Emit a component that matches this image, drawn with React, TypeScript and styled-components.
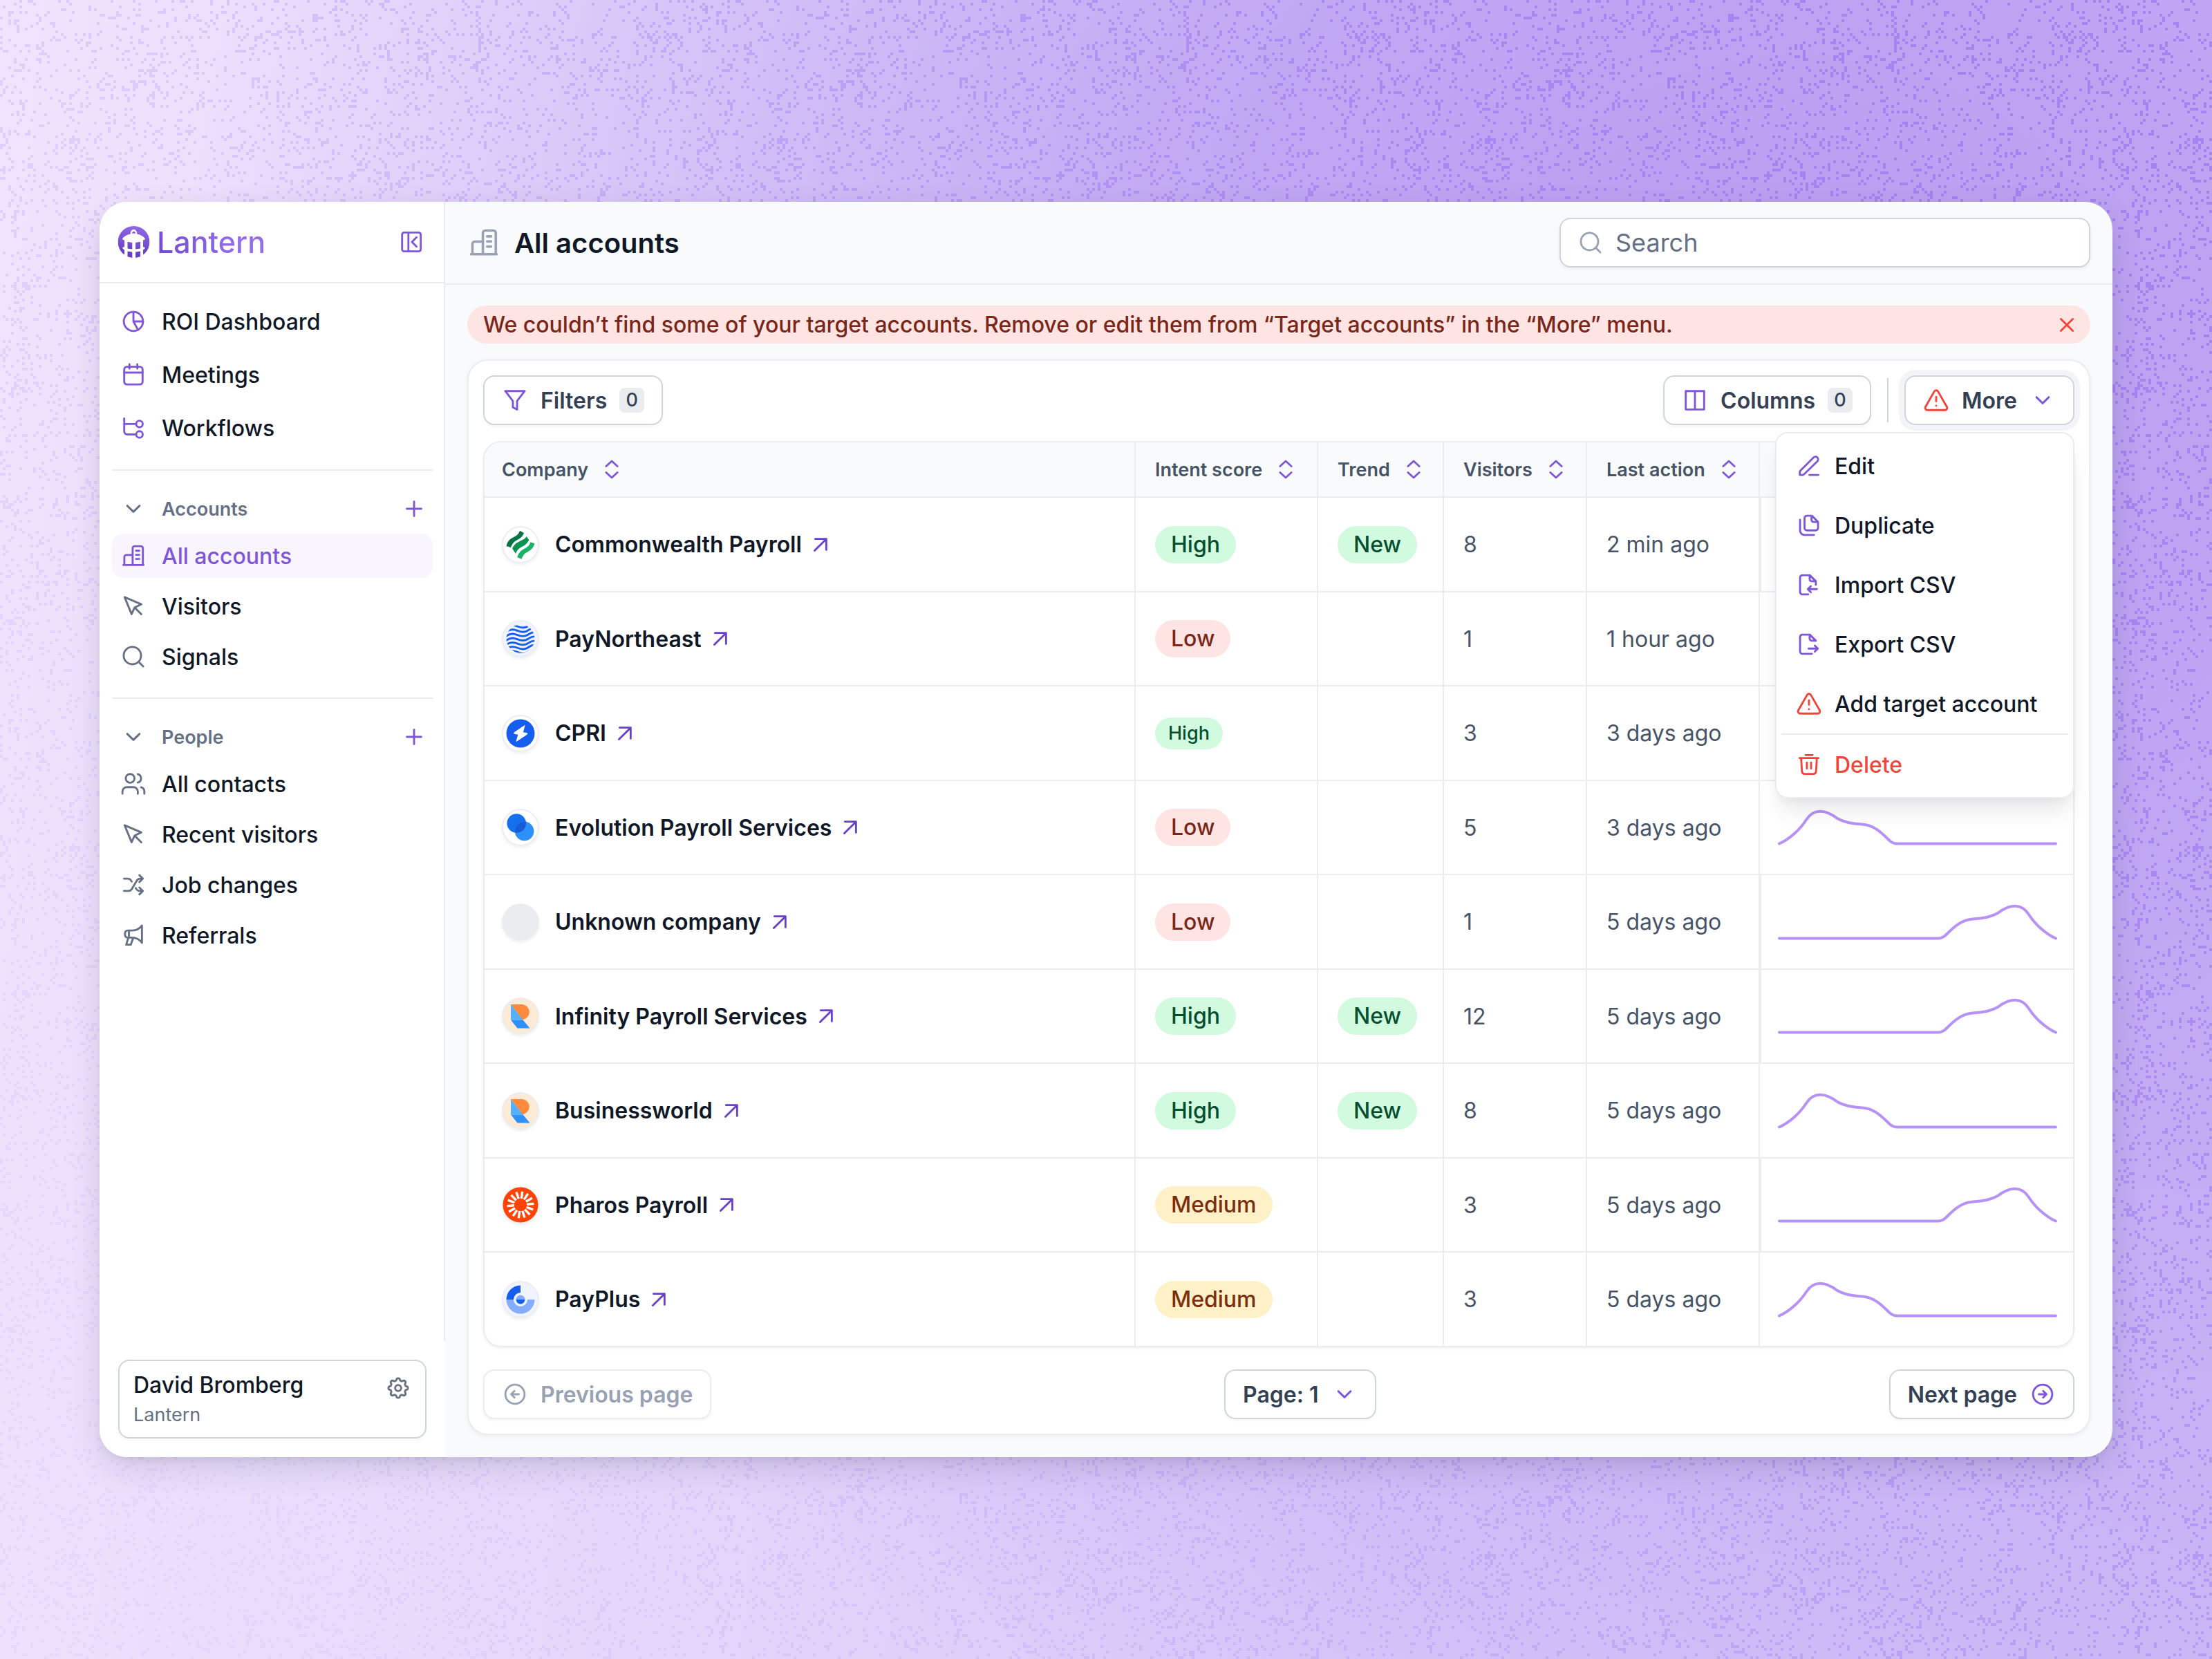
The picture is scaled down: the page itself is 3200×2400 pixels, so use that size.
import React from "react";
import styled, { createGlobalStyle, css } from "styled-components";
import { TriangleAlert, Users } from "lucide-react";

const c = {
  ink: "#101828",
  strong: "#344054",
  body: "#475467",
  muted: "#667085",
  faint: "#98a2b3",
  border: "#d0d5dd",
  line: "#eaecf0",
  surface: "#f9fafb",
  purple: "#7f56d9",
  purpleDark: "#6941c6",
  red: "#f04438",
};

const Global = createGlobalStyle`
  *, *::before, *::after { box-sizing: border-box; }
  body {
    margin: 0;
    font-family: Inter, "Liberation Sans", sans-serif;
    font-size: 32px;
    color: ${c.ink};
  }
  button, input, select { font: inherit; color: inherit; }
`;

/* ---------- Icons ---------- */

const paths: Record<string, React.ReactNode> = {
  pie: <><circle cx="10" cy="10" r="7.3" /><path d="M10 2.7V10H17.3M10 10L13.5 16.4" /></>,
  calendar: <><rect x="3" y="4" width="14" height="13.4" rx="2" /><path d="M3 8.4H17M7 2V5.4M13 2V5.4" /></>,
  workflow: <><path d="M3 2.8V12.6A2.4 2.4 0 0 0 5.4 15H12.1M3 7H12.1" /><circle cx="14.6" cy="7" r="2.5" /><circle cx="14.6" cy="15" r="2.5" /></>,
  collapse: <><rect x="3" y="2.8" width="14.2" height="14.4" rx="1.6" /><path d="M7.8 2.8V17.2M14 6.5L10.5 10L14 13.6" /></>,
  building: <path d="M2.3 17H17.7M3.1 17V10.9A1.5 1.5 0 0 1 4.6 9.4H9.4M9.4 17V4.2A1.5 1.5 0 0 1 10.9 2.7H15.7A1.5 1.5 0 0 1 17.2 4.2V17M12 6.2H14.4M12 9.3H14.4M12 12.4H14.4" />,
  cursor: <path d="M3.3 3.1L16 8.5L11 10.9L8.6 16L3.3 3.1ZM11 11L16 16" />,
  search: <><circle cx="9.2" cy="9.2" r="6.6" /><path d="M14 14L17.4 17.4" /></>,
  shuffle: <path d="M2.8 5.3H5.6C7 5.3 8 6 8.7 7.5M2.8 14.7H6.2C7.2 14.7 8 14.3 8.6 13.5L12.8 6.5C13.4 5.7 14.2 5.3 15.2 5.3H17.2M14.6 2.7L17.2 5.3L14.6 7.9M11.8 12.5C12.5 14 13.6 14.7 15 14.7H17.2M14.6 12.1L17.2 14.7L14.6 17.3" />,
  megaphone: <path d="M16.5 2.6V15.8C14.5 13 12 11.8 9 11.8H5.6A2 2 0 0 1 3.6 9.8V8.4A2 2 0 0 1 5.6 6.4H9C12 6.4 14.5 5.3 16.5 2.6ZM6.6 6.4V11.8M6.2 11.9L4.5 17.2H8L9.8 12" />,
  chevron: <path d="M5.3 7.7L10 12.3L14.7 7.7" />,
  plus: <path d="M4.5 10H15.5M10 4.5V15.5" />,
  filter: <path d="M2.6 3H17.4L11.6 10.6V17.1L8.4 15.4V10.6L2.6 3Z" />,
  columns: <path d="M3 3H17V17H3ZM10 3V17" />,
  close: <path d="M5.5 5.5L14.5 14.5M14.5 5.5L5.5 14.5" />,
  sort: <path d="M5.7 7.6L10 3.7L14.3 7.6M5.7 12.4L10 16.3L14.3 12.4" />,
  arrowUp: <path d="M5.5 14.5L14.4 5.6M6 5.6H14.4V13.9" />,
  circleLeft: <><circle cx="10" cy="10" r="7.3" /><path d="M12.9 10H7.2M9.6 7.5L7.1 10L9.6 12.5" /></>,
  circleRight: <><circle cx="10" cy="10" r="7.3" /><path d="M7.1 10H12.8M10.4 7.5L12.9 10L10.4 12.5" /></>,
  edit: <path d="M3 16.9V14.7C3 14.2 3.2 13.8 3.5 13.5L13.5 3.6A2 2 0 0 1 16.4 6.4L6.3 16.3C6 16.7 5.6 16.9 5.1 16.9ZM10.3 16.9H17.2" />,
  duplicate: <path d="M8.4 2.7H12.2L16.9 7.4V12A1.8 1.8 0 0 1 15.1 13.8H8.4A1.8 1.8 0 0 1 6.6 12V4.5A1.8 1.8 0 0 1 8.4 2.7ZM11.9 2.8V5.8A1.6 1.6 0 0 0 13.5 7.4H16.7M3.2 5.7V14A3.3 3.3 0 0 0 6.5 17.3H13.8" />,
  importFile: <path d="M9.4 17.3H5A1.8 1.8 0 0 1 3.2 15.5V4.5A1.8 1.8 0 0 1 5 2.7H10.6L15.2 7.3V10M10.5 2.8V5.7A1.6 1.6 0 0 0 12.1 7.3H15M16 13.3H9.2M11.4 11L9.1 13.3L11.4 15.6" />,
  exportFile: <path d="M12.2 17.3H5A1.8 1.8 0 0 1 3.2 15.5V4.5A1.8 1.8 0 0 1 5 2.7H10.6L15.2 7.3M10.5 2.8V5.7A1.6 1.6 0 0 0 12.1 7.3H15M9.7 13.3H16.7M14.4 11L16.7 13.3L14.4 15.6" />,
  trash: <path d="M2.8 5.1H17.2M7.4 2.8H12.6M4 5.1L4.6 14.9C4.7 16.2 5.5 17.2 6.8 17.2H13.2C14.5 17.2 15.3 16.2 15.4 14.9L16 5.1M8.4 8.5V13M11.6 8.5V13" />,
};

const gearPath = Array.from({ length: 96 }, (_, i) => {
  const a = (i / 96) * Math.PI * 2;
  const r = 6.6 + 0.85 * Math.tanh(1.8 * Math.cos(a * 8));
  return `${i ? "L" : "M"}${(10 + r * Math.sin(a)).toFixed(2)} ${(10 - r * Math.cos(a)).toFixed(2)}`;
}).join("") + "Z";
paths.gear = <><path d={gearPath} /><circle cx="10" cy="10" r="2.3" /></>;

const Svg = styled.svg<{ $color: string }>`
  flex: none;
  display: block;
  fill: none;
  stroke: ${(p) => p.$color};
  stroke-width: 1.5;
  stroke-linecap: round;
  stroke-linejoin: round;
`;

const UsersIcon = styled(Users)`flex: none;`;
const AlertIcon = styled(TriangleAlert)`flex: none;`;

function Icon({ name, color = c.purple, size = 38 }: { name: string; color?: string; size?: number }) {
  if (name === "users") return <UsersIcon size={size} color={color} strokeWidth={1.8} aria-hidden />;
  if (name === "alert") return <AlertIcon size={size} color={color} strokeWidth={1.8} aria-hidden />;
  return (
    <Svg $color={color} width={size} height={size} viewBox="0 0 20 20" aria-hidden>
      {paths[name]}
    </Svg>
  );
}

/* ---------- Backdrop ---------- */

const Page = styled.div`
  position: relative;
  min-height: 100vh;
  display: flex;
  align-items: center;
  padding: 144px;
  background:
    radial-gradient(ellipse 72% 90% at 80% 22%, #b99df1 0%, rgba(188, 161, 242, 0.85) 35%, rgba(194, 170, 243, 0) 100%),
    linear-gradient(95deg, #efe3fd 0%, #e6d8fb 30%, #d8c7f9 65%, #cdb9f6 100%);
`;

const Grain = styled.svg`
  position: absolute;
  inset: 0;
  width: 100%;
  height: 100%;
`;

const CELL = 4;
const TILE = 256;
function makeGrain() {
  let seed = 77123;
  const rand = () => {
    seed = (seed * 1664525 + 1013904223) % 4294967296;
    return seed / 4294967296;
  };
  const G = 40;
  const lattice = Array.from({ length: G * G }, rand);
  const at = (i: number, j: number) => lattice[((j + G) % G) * G + ((i + G) % G)];
  let d = "";
  for (let y = 0; y < TILE; y++) {
    for (let x = 0; x < TILE; x++) {
      const gx = (x / TILE) * G;
      const gy = (y / TILE) * G;
      const x0 = Math.floor(gx), y0 = Math.floor(gy);
      const fx = gx - x0, fy = gy - y0;
      const n =
        at(x0, y0) * (1 - fx) * (1 - fy) + at(x0 + 1, y0) * fx * (1 - fy) +
        at(x0, y0 + 1) * (1 - fx) * fy + at(x0 + 1, y0 + 1) * fx * fy;
      if (rand() < 0.06 + 0.22 * n * n) d += `M${x * CELL} ${y * CELL}h4v4h-4z`;
    }
  }
  return d;
}
const grain = makeGrain();

function Backdrop() {
  return (
    <Grain aria-hidden>
      <defs>
        <pattern id="grain" width={TILE * CELL} height={TILE * CELL} patternUnits="userSpaceOnUse">
          <path d={grain} fill="#8257eb" shapeRendering="crispEdges" />
        </pattern>
        <linearGradient id="fade" x1="0" y1="0.7" x2="1" y2="0.1">
          <stop offset="0" stopColor="#fff" stopOpacity="0.06" />
          <stop offset="0.35" stopColor="#fff" stopOpacity="0.16" />
          <stop offset="0.75" stopColor="#fff" stopOpacity="0.36" />
          <stop offset="1" stopColor="#fff" stopOpacity="0.42" />
        </linearGradient>
        <mask id="grainMask">
          <rect width="100%" height="100%" fill="url(#fade)" />
        </mask>
      </defs>
      <rect width="100%" height="100%" fill="url(#grain)" mask="url(#grainMask)" />
    </Grain>
  );
}

/* ---------- Shell ---------- */

const Shell = styled.div`
  position: relative;
  flex: 1;
  min-width: 0;
  display: flex;
  border-radius: 40px;
  overflow: hidden;
  background: ${c.surface};
  box-shadow: 0 16px 48px -4px rgba(16, 24, 40, 0.14), 0 6px 14px -4px rgba(16, 24, 40, 0.08);
`;

const Sidebar = styled.aside`
  flex: none;
  width: 500px;
  display: flex;
  flex-direction: column;
  background: #fff;
`;

const SideTop = styled.div`
  flex: 1;
  border-right: 2px solid ${c.line};
`;

const SideHeader = styled.div`
  height: 118px;
  display: flex;
  align-items: center;
  justify-content: space-between;
  padding: 0 28px 0 26px;
  border-bottom: 2px solid ${c.line};
`;

const Brand = styled.a`
  display: flex;
  align-items: center;
  gap: 10px;
  text-decoration: none;
`;

const BrandName = styled.span`
  font-size: 43px;
  font-weight: 500;
  line-height: 54px;
  background: linear-gradient(60deg, #7148d0 0%, #946ee9 70%);
  background-clip: text;
  -webkit-background-clip: text;
  color: transparent;
`;

const IconButton = styled.button`
  flex: none;
  display: flex;
  padding: 0;
  border: 0;
  background: none;
  cursor: pointer;
`;

const Nav = styled.nav`
  padding: 0 16px 0 18px;
`;

const NavGroup = styled.div<{ $first?: boolean }>`
  display: flex;
  flex-direction: column;
  gap: ${(p) => (p.$first ? 13 : 9)}px;
  padding: ${(p) => (p.$first ? "23px 0 28px" : "28px 0 27px")};
  & + & {
    border-top: 2px solid ${c.line};
  }
`;

const NavItem = styled.a<{ $active?: boolean }>`
  display: flex;
  align-items: center;
  gap: 22px;
  height: 64px;
  padding: 0 12px;
  border-radius: 16px;
  font-weight: 500;
  text-decoration: none;
  color: ${(p) => (p.$active ? c.purple : c.ink)};
  background: ${(p) => (p.$active ? "#f9f5ff" : "none")};
`;

const GroupHead = styled.div`
  display: flex;
  align-items: center;
  justify-content: space-between;
  height: 54px;
  padding: 0 8px 0 12px;
`;

const GroupToggle = styled.button`
  display: flex;
  align-items: center;
  gap: 22px;
  padding: 0;
  border: 0;
  background: none;
  font-size: 27px;
  font-weight: 600;
  color: ${c.muted};
  cursor: pointer;
`;

const UserCard = styled.div`
  display: flex;
  justify-content: space-between;
  margin: 27px;
  padding: 12px 20px;
  border: 2px solid ${c.border};
  border-radius: 16px;
  box-shadow: 0 2px 4px rgba(16, 24, 40, 0.05);
`;

const UserName = styled.div`
  font-weight: 500;
  line-height: 46px;
`;

const UserOrg = styled.div`
  font-size: 27px;
  line-height: 40px;
  color: ${c.muted};
`;

const SettingsButton = styled(IconButton)`
  height: 54px;
  align-items: center;
`;

/* ---------- Main ---------- */

const Main = styled.main`
  flex: 1;
  min-width: 0;
`;

const Header = styled.header`
  height: 120px;
  display: flex;
  align-items: center;
  gap: 20px;
  padding: 0 32px;
  border-bottom: 2px solid ${c.line};
`;

const Title = styled.h1`
  flex: 1;
  margin: 0;
  font-size: 40px;
  font-weight: 600;
`;

const control = css`
  display: flex;
  align-items: center;
  height: 72px;
  border: 2px solid ${c.border};
  border-radius: 16px;
  background: #fff;
  box-shadow: 0 2px 4px rgba(16, 24, 40, 0.05);
`;

const SearchBox = styled.label`
  ${control}
  width: 768px;
  gap: 17px;
  padding: 0 24px;
`;

const SearchInput = styled.input`
  flex: 1;
  min-width: 0;
  padding: 0;
  border: 0;
  outline: 0;
  background: none;
  font-size: 36px;
  &::placeholder {
    color: ${c.muted};
    opacity: 1;
  }
`;

const Content = styled.div`
  padding: 30px 32px 32px;
`;

const Banner = styled.div`
  display: flex;
  align-items: center;
  justify-content: space-between;
  height: 55px;
  margin-bottom: 23px;
  padding: 0 15px 0 23px;
  border-radius: 28px;
  background: #fee4e2;
  color: #7a271a;
  font-weight: 500;
`;

const Card = styled.section`
  padding: 21px;
  border: 2px solid ${c.line};
  border-radius: 30px;
  background: #fff;
  box-shadow: 0 2px 6px rgba(16, 24, 40, 0.06);
`;

const Row = styled.div`
  display: flex;
  align-items: center;
  justify-content: space-between;
`;

const Tools = styled.div`
  display: flex;
  align-items: center;
  gap: 23px;
`;

const Button = styled.button<{ $ring?: boolean }>`
  ${control}
  gap: 18px;
  padding: 0 25px;
  font-weight: 600;
  color: ${c.strong};
  cursor: pointer;
  ${(p) => p.$ring && css`box-shadow: 0 0 0 8px #f2f4f7, 0 2px 4px rgba(16, 24, 40, 0.05);`}
  &:disabled {
    border-color: ${c.line};
    color: ${c.faint};
    cursor: default;
  }
`;

const Count = styled.span`
  min-width: 36px;
  height: 36px;
  border-radius: 8px;
  background: ${c.line};
  font-size: 27px;
  font-weight: 500;
  line-height: 36px;
  text-align: center;
`;

const Divider = styled.span`
  width: 2px;
  height: 64px;
  background: ${c.border};
`;

const MenuAnchor = styled.div`
  position: relative;
`;

const Menu = styled.div`
  position: absolute;
  z-index: 2;
  top: calc(100% + 10px);
  right: 0;
  width: 433px;
  padding: 4px 0;
  border: 2px solid ${c.line};
  border-radius: 18px;
  background: #fff;
  box-shadow: 0 24px 32px -8px rgba(16, 24, 40, 0.1), 0 8px 12px -4px rgba(16, 24, 40, 0.04);
`;

const MenuItem = styled.button<{ $danger?: boolean }>`
  display: flex;
  align-items: center;
  gap: 18px;
  width: 100%;
  height: 86px;
  padding: 0 28px;
  border: 0;
  background: none;
  font-weight: 500;
  color: ${(p) => (p.$danger ? c.red : c.ink)};
  cursor: pointer;
`;

const MenuLine = styled.div`
  height: 2px;
  margin: 0 7px;
  background: ${c.line};
`;

const TableFrame = styled.div`
  margin: 23px 0 32px;
  border: 2px solid ${c.line};
  border-radius: 26px;
  overflow: hidden;
  box-shadow: 0 2px 4px rgba(16, 24, 40, 0.06);
`;

const Table = styled.table`
  width: 100%;
  table-layout: fixed;
  border-collapse: separate;
  border-spacing: 0;
`;

const cellLines = css`
  padding: 0 0 0 28px;
  border-right: 2px solid ${c.line};
  border-bottom: 2px solid ${c.line};
  &:first-child { padding-left: 25px; }
  &:last-child { padding-left: 26px; border-right: 0; }
`;

const Th = styled.th<{ $width?: number }>`
  ${cellLines}
  width: ${(p) => (p.$width ? `${p.$width}px` : "auto")};
  height: 80px;
  background: ${c.surface};
`;

const SortButton = styled.button`
  display: flex;
  align-items: center;
  gap: 15px;
  padding: 0;
  border: 0;
  background: none;
  font-size: 27px;
  font-weight: 600;
  color: ${c.body};
  cursor: pointer;
`;

const BodyRow = styled.tr`
  height: 137px;
  &:nth-child(even) { height: 136px; }
  &:last-child { height: 135px; }
  &:last-child > td { border-bottom: 0; }
`;

const Td = styled.td<{ $edge?: boolean }>`
  ${cellLines}
  color: ${c.body};
  ${(p) => p.$edge && css`&:last-child { border-left: 2px solid ${c.line}; padding-left: 24px; }`}
`;

const Company = styled.a`
  display: flex;
  align-items: center;
  font-weight: 600;
  color: ${c.ink};
  text-decoration: none;
`;

const Avatar = styled.svg`
  flex: none;
  margin-right: 23px;
  border-radius: 50%;
  box-shadow: 0 2px 4px rgba(16, 24, 40, 0.08);
`;

const CompanyName = styled.span`
  margin-right: 8px;
`;

const tones = {
  High: ["#d1fadf", "#054f31"],
  New: ["#d1fadf", "#054f31"],
  Low: ["#fee4e2", "#7a271a"],
  Medium: ["#fef0c7", "#7a2e0e"],
};
type Tone = keyof typeof tones;

const Pill = styled.span<{ $tone: Tone; $small?: boolean }>`
  display: block;
  width: fit-content;
  padding: 0 ${(p) => (p.$small ? 19 : 23)}px;
  border-radius: 27px;
  background: ${(p) => tones[p.$tone][0]};
  color: ${(p) => tones[p.$tone][1]};
  font-size: ${(p) => (p.$small ? 27 : 32)}px;
  font-weight: 500;
  line-height: ${(p) => (p.$small ? 46 : 54)}px;
`;

const Spark = styled.svg`
  display: block;
  fill: none;
  stroke: #b692f6;
  stroke-width: 4;
  stroke-linecap: round;
`;

const PageSelect = styled.label`
  ${control}
  gap: 18px;
  padding: 0 25px;
`;

const SelectField = styled.select`
  appearance: none;
  padding: 0;
  border: 0;
  outline: 0;
  background: none;
  font-weight: 600;
  color: ${c.strong};
`;

/* ---------- Logos ---------- */

function LanternMark() {
  return (
    <svg width="47" height="46" viewBox="0 0 46 46" aria-hidden>
      <defs>
        <linearGradient id="mark" x1="0.5" y1="0" x2="0.4" y2="1">
          <stop offset="0" stopColor="#8f68e6" />
          <stop offset="1" stopColor="#6239bd" />
        </linearGradient>
        <mask id="lantern">
          <circle cx="23" cy="23" r="23" fill="#fff" />
          <path d="M18.2 11.5C18.2 7.5 20 5 23 5S27.800 7.500 27.800 11.500C33 12.500 37 15 39 17.500C39.800 19 38.500 20.800 36.500 20.200V30.500C38 30 39.500 31 39 32.500L36.500 34.500V46H9.500V34.500L7 32.500C6.500 31 8 30 9.500 30.500V20.200C7.500 20.800 6.200 19 7 17.500C9 15 13 12.500 18.200 11.500Z" fill="#000" />
          <path d="M20.600 10.800C20.600 8.900 21.500 7.700 23 7.700S25.400 8.900 25.400 10.800Z" fill="#fff" />
          <path d="M14 22.800L20.800 24V33.400L14 32.600ZM32.500 22.800L25.600 24V33.400L32.500 32.600ZM14 36.600L20.800 37.600V46L14 44.300ZM32.500 36.600L25.600 37.600V46L32.500 44.300Z" fill="#fff" />
        </mask>
      </defs>
      <rect width="46" height="46" fill="url(#mark)" mask="url(#lantern)" />
    </svg>
  );
}

const logos: Record<string, { bg: string; art: React.ReactNode }> = {
  ribbons: {
    bg: "#fff",
    art: (
      <>
        <path d="M26 6.700L32 10C29.500 16 27 17.500 22.500 20C17 23 15 25.500 13 31L6.500 29C8 23 10 20 14.500 17.500C20 14.500 23.500 13 26 6.700Z" fill="#087443" />
        <path d="M35.700 15L39.300 20.300C36 26 33 28 29 30C24 32.500 22 35 20 40L15 32.300C18 27 20 25 25 22.500C30 20 33.500 19 35.700 15Z" fill="#099250" />
        <path d="M41.300 23.300L47.300 25.300C46 31 43 34 38 37C33 39.500 31 41.500 28.700 47.700L22.300 45.300C24 39 27 36 32 33C37 30.500 40 28.500 41.300 23.300Z" fill="#16b364" />
      </>
    ),
  },
  waves: {
    bg: "#eff4ff",
    art: (
      <>
        <clipPath id="waveClip"><circle cx="27" cy="27" r="20.500" /></clipPath>
        <g clipPath="url(#waveClip)" fill="none" stroke="#155eef" strokeWidth="2.900">
          {[10, 16.2, 22.4, 28.6, 34.8, 41, 47.2].map((y) => (
            <path key={y} d={`M4 ${y + 3}C10 ${y - 3} 16 ${y - 3.5} 22 ${y - 1}C29 ${y + 2} 34 ${y + 2} 39 ${y - 2}C43 ${y - 5} 46 ${y - 5} 50 ${y - 5}`} />
          ))}
        </g>
      </>
    ),
  },
  bolt: {
    bg: "#fff",
    art: (
      <>
        <circle cx="27" cy="27" r="20.500" fill="#155eef" />
        <path d="M33 15.500L18 25.800C17.200 26.500 17.400 27.200 18.300 27.400L24 28.300L21 38.500L36.300 28.300C37.200 27.600 37 26.800 36 26.600L30.300 25.700L33 15.500Z" fill="#fff" stroke="#fff" strokeLinejoin="round" />
      </>
    ),
  },
  discs: {
    bg: "#fff",
    art: (
      <>
        <clipPath id="discClip"><circle cx="21.200" cy="21" r="13.800" /></clipPath>
        <circle cx="21.200" cy="21" r="13.800" fill="#1570ef" />
        <circle cx="32.600" cy="32.400" r="13.800" fill="#2e90fa" />
        <circle cx="32.600" cy="32.400" r="13.800" fill="#175cd3" clipPath="url(#discClip)" />
      </>
    ),
  },
  none: { bg: c.line, art: null },
  ribbonR: {
    bg: "#fdead7",
    art: (
      <>
        <path d="M13 10H30A11.200 11.200 0 0 1 31 32L29.500 32Z" fill="#ff8a3d" />
        <path d="M13 10V32.500H30.500Z" fill="#53b1fd" />
        <path d="M13 32.500H30.500L40.600 44.500H22.500Z" fill="#2e90fa" />
      </>
    ),
  },
  burst: {
    bg: "#ff4405",
    art: (
      <g stroke="#fff" strokeWidth="3.400">
        <circle cx="27" cy="27" r="25.500" fill="#ff4405" stroke="none" />
        {Array.from({ length: 14 }, (_, i) => (
          <path key={i} d="M27 7.500V17.800" transform={`rotate(${8 + (i * 360) / 14} 27 27)`} />
        ))}
        <circle cx="27" cy="27" r="8.600" fill="#ff4405" stroke="none" />
      </g>
    ),
  },
  ring: {
    bg: "#eff4ff",
    art: (
      <>
        <path d="M6.500 27A20.500 20.500 0 0 0 47.500 27H37A10 10 0 0 1 17 27Z" fill="#84adff" />
        <path d="M6.500 27A20.500 20.500 0 0 1 27 6.500V17A10 10 0 0 0 17 27Z" fill="#155eef" />
        <path d="M20.500 27A6.500 6.500 0 0 1 33.500 27Z" fill="#84adff" />
        <path d="M20.500 27A6.500 6.500 0 0 0 33.500 27Z" fill="#155eef" />
      </>
    ),
  },
};

function CompanyLogo({ name }: { name: string }) {
  const { bg, art } = logos[name];
  return (
    <Avatar width="54" height="54" viewBox="0 0 54 54" aria-hidden>
      <circle cx="27" cy="27" r="26" fill={bg} stroke={c.line} strokeWidth="2" />
      {art}
    </Avatar>
  );
}

/* ---------- Data ---------- */

const topNav = [
  ["pie", "ROI Dashboard"],
  ["calendar", "Meetings"],
  ["workflow", "Workflows"],
];

const groups = [
  { title: "Accounts", items: [["building", "All accounts"], ["cursor", "Visitors"], ["search", "Signals"]] },
  { title: "People", items: [["users", "All contacts"], ["cursor", "Recent visitors"], ["shuffle", "Job changes"], ["megaphone", "Referrals"]] },
];

const columns: [string, number?][] = [
  ["Company"],
  ["Intent score", 264],
  ["Trend", 182],
  ["Visitors", 207],
  ["Last action", 250],
];

type Account = { name: string; logo: string; score: Tone; small?: boolean; fresh?: boolean; visitors: number; last: string; rising?: boolean };

const accounts: Account[] = [
  { name: "Commonwealth Payroll", logo: "ribbons", score: "High", fresh: true, visitors: 8, last: "2 min ago", rising: true },
  { name: "PayNortheast", logo: "waves", score: "Low", visitors: 1, last: "1 hour ago" },
  { name: "CPRI", logo: "bolt", score: "High", small: true, visitors: 3, last: "3 days ago" },
  { name: "Evolution Payroll Services", logo: "discs", score: "Low", visitors: 5, last: "3 days ago" },
  { name: "Unknown company", logo: "none", score: "Low", visitors: 1, last: "5 days ago", rising: true },
  { name: "Infinity Payroll Services", logo: "ribbonR", score: "High", fresh: true, visitors: 12, last: "5 days ago", rising: true },
  { name: "Businessworld", logo: "ribbonR", score: "High", fresh: true, visitors: 8, last: "5 days ago" },
  { name: "Pharos Payroll", logo: "burst", score: "Medium", visitors: 3, last: "5 days ago", rising: true },
  { name: "PayPlus", logo: "ring", score: "Medium", visitors: 3, last: "5 days ago" },
];

const menuItems = [
  ["edit", "Edit"],
  ["duplicate", "Duplicate"],
  ["importFile", "Import CSV"],
  ["exportFile", "Export CSV"],
  ["alert", "Add target account"],
];

/* ---------- App ---------- */

export default function App() {
  return (
    <Page>
      <Global />
      <Backdrop />
      <Shell>
        <Sidebar>
          <SideTop>
            <SideHeader>
              <Brand href="#" aria-label="Lantern">
                <LanternMark />
                <BrandName>Lantern</BrandName>
              </Brand>
              <IconButton aria-label="Collapse sidebar"><Icon name="collapse" /></IconButton>
            </SideHeader>
            <Nav>
              <NavGroup $first>
                {topNav.map(([icon, label]) => (
                  <NavItem href="#" key={label}><Icon name={icon} />{label}</NavItem>
                ))}
              </NavGroup>
              {groups.map((g) => (
                <NavGroup key={g.title}>
                  <GroupHead>
                    <GroupToggle><Icon name="chevron" color={c.muted} />{g.title}</GroupToggle>
                    <IconButton aria-label={`Add to ${g.title}`}><Icon name="plus" /></IconButton>
                  </GroupHead>
                  {g.items.map(([icon, label]) => {
                    const active = label === "All accounts";
                    return (
                      <NavItem href="#" key={label} $active={active}>
                        <Icon name={icon} color={active ? c.purple : c.muted} />
                        {label}
                      </NavItem>
                    );
                  })}
                </NavGroup>
              ))}
            </Nav>
          </SideTop>
          <UserCard>
            <div>
              <UserName>David Bromberg</UserName>
              <UserOrg>Lantern</UserOrg>
            </div>
            <SettingsButton aria-label="Settings"><Icon name="gear" color={c.muted} /></SettingsButton>
          </UserCard>
        </Sidebar>

        <Main>
          <Header>
            <Icon name="building" color={c.faint} size={48} />
            <Title>All accounts</Title>
            <SearchBox>
              <Icon name="search" color={c.faint} />
              <SearchInput type="text" placeholder="Search" aria-label="Search" />
            </SearchBox>
          </Header>
          <Content>
            <Banner role="alert">
              <span>We couldn’t find some of your target accounts. Remove or edit them from “Target accounts” in the “More” menu.</span>
              <IconButton aria-label="Dismiss"><Icon name="close" color={c.red} /></IconButton>
            </Banner>
            <Card>
              <Row>
                <Button><Icon name="filter" />Filters<Count>0</Count></Button>
                <Tools>
                  <Button><Icon name="columns" />Columns<Count>0</Count></Button>
                  <Divider />
                  <MenuAnchor>
                    <Button $ring aria-haspopup="menu" aria-expanded>
                      <Icon name="alert" color={c.red} />More<Icon name="chevron" />
                    </Button>
                    <Menu role="menu">
                      {menuItems.map(([icon, label]) => (
                        <MenuItem role="menuitem" key={label}>
                          <Icon name={icon} color={icon === "alert" ? c.red : c.purple} />
                          {label}
                        </MenuItem>
                      ))}
                      <MenuLine />
                      <MenuItem role="menuitem" $danger><Icon name="trash" color={c.red} />Delete</MenuItem>
                    </Menu>
                  </MenuAnchor>
                </Tools>
              </Row>
              <TableFrame>
                <Table>
                  <thead>
                    <tr>
                      {columns.map(([label, width]) => (
                        <Th key={label} $width={width} scope="col">
                          <SortButton>{label}<Icon name="sort" /></SortButton>
                        </Th>
                      ))}
                      <Th $width={453} scope="col" aria-label="Activity" />
                    </tr>
                  </thead>
                  <tbody>
                    {accounts.map((a) => (
                      <BodyRow key={a.name}>
                        <Td>
                          <Company href="#">
                            <CompanyLogo name={a.logo} />
                            <CompanyName>{a.name}</CompanyName>
                            <Icon name="arrowUp" color={c.purpleDark} />
                          </Company>
                        </Td>
                        <Td><Pill $tone={a.score} $small={a.small}>{a.score}</Pill></Td>
                        <Td>{a.fresh && <Pill $tone="New">New</Pill>}</Td>
                        <Td>{a.visitors}</Td>
                        <Td>{a.last}</Td>
                        <Td $edge={a.rising}>
                          <Spark width="404" height="52" viewBox="0 0 404 52" role="img" aria-label="Activity over time">
                            <path
                              d="M2 49.500C17 43 32 29 41 15C51 -1 68 -1 86 13C98 20 111 21 122 21.500C140 22.500 152 36 162 45.500Q167 49.500 172 49.500H402"
                              transform={a.rising ? "translate(404 0) scale(-1 1)" : undefined}
                            />
                          </Spark>
                        </Td>
                      </BodyRow>
                    ))}
                  </tbody>
                </Table>
              </TableFrame>
              <Row>
                <Button disabled><Icon name="circleLeft" color={c.faint} />Previous page</Button>
                <PageSelect>
                  <SelectField aria-label="Page" defaultValue="1">
                    <option value="1">Page: 1</option>
                  </SelectField>
                  <Icon name="chevron" />
                </PageSelect>
                <Button>Next page<Icon name="circleRight" /></Button>
              </Row>
            </Card>
          </Content>
        </Main>
      </Shell>
    </Page>
  );
}
